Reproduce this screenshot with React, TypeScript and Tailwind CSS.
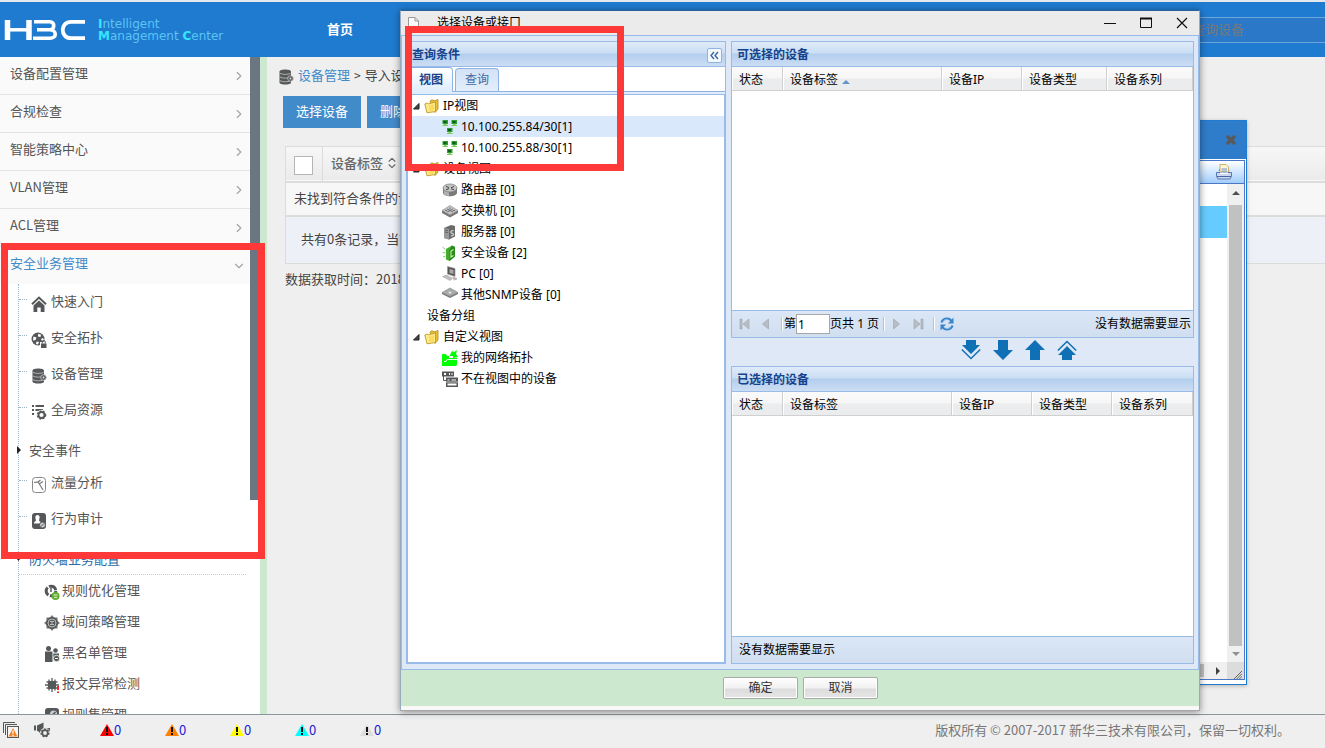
import React from "react";
import { ChevronDown, ChevronRight, ChevronsUpDown } from "lucide-react";

type IconProps = { children: React.ReactNode; className?: string; box?: string };

function Svg({ children, className = "size-4", box = "0 0 16 16" }: IconProps) {
  return (
    <svg viewBox={box} className={`shrink-0 ${className}`} aria-hidden="true">
      {children}
    </svg>
  );
}

const DARK = "#555859";

/* ---------- sidebar icons ---------- */

const HomeIcon = () => (
  <Svg>
    <path d="M1 8.200 8 1.600l7 6.600" fill="none" stroke={DARK} strokeWidth="2" />
    <path d="M2.500 9.600 8 4.600l5.500 5V16h-3.800v-4.500H6.300V16H2.500z" fill={DARK} />
  </Svg>
);

const GlobeLockIcon = () => (
  <Svg>
    <circle cx="7" cy="7" r="6.500" fill={DARK} />
    <path d="M2.500 4.500l3 1-1 2.500-2.500.500zM7 2l3 .500-.500 2.500-2.500-.500zM11 6l2 1-1 2-2-1zM5.500 9.500l2.500.500-1 2.500-2-.500z" fill="#fff" />
    <path d="M9 10h7v6H9z" fill="#fff" />
    <path d="M10 11.500h5.500V16H10z" fill={DARK} />
    <path d="M11.200 11.500V10a1.500 1.500 0 0 1 3 0v1.500" fill="none" stroke={DARK} />
  </Svg>
);

const DatabaseIcon = () => (
  <Svg>
    <path d="M1.500 2.500C1.500-.300 13-.300 13 2.500v11c0 2.800-11.500 2.800-11.500 0z" fill={DARK} />
    <path d="M2 4.300c2 1.500 8.500 1.500 10.500 0M2 8c2 1.500 8.500 1.500 10.500 0M2 11.700c2 1.500 8.500 1.500 10.500 0" fill="none" stroke="#c4c4c4" strokeWidth=".8" />
    <circle cx="12.500" cy="9.500" r="2.800" fill={DARK} stroke="#ccc" strokeWidth=".8" />
    <circle cx="12.500" cy="9.500" r="1" fill="#ddd" />
  </Svg>
);

const Gear = ({ x, y, r, bg = "#fff" }: { x: number; y: number; r: number; bg?: string }) => (
  <>
    <circle cx={x} cy={y} r={r + 1.8} fill={bg} />
    <circle cx={x} cy={y} r={r + 0.6} fill="none" stroke={DARK} strokeWidth="1.600" strokeDasharray="1.700 1.600" />
    <circle cx={x} cy={y} r={r - 0.4} fill={bg} stroke={DARK} strokeWidth="1.800" />
  </>
);

const ResourceIcon = () => (
  <Svg>
    <path d="M1 2h2M4.500 2H13M1 6h2M4.500 6H12M1 10h2" stroke={DARK} strokeWidth="2" />
    <Gear x={10.5} y={11} r={3.4} />
  </Svg>
);

const FlowIcon = () => (
  <Svg>
    <rect x="1.500" y=".5" width="13" height="15" rx="3" fill="#fff" stroke="#888" />
    <path d="M3 5.500l4-.500 2 3 3 5M7 5l2.500-2M8 7l4-2.500" fill="none" stroke="#777" strokeWidth="1.200" />
  </Svg>
);

const AuditIcon = () => (
  <Svg>
    <rect x="1" y="0" width="14" height="16" rx="3" fill={DARK} />
    <path d="M6.500 2c2.500 0 2.500 3 1.500 5 0 2 2 1 2.500 3.500H3C3 8 5 9 5 7 4 5 4 2 6.500 2z" fill="#fff" />
    <circle cx="11.500" cy="12" r="3" fill="#ccc" stroke={DARK} />
    <path d="M10 13.500l3-3" stroke={DARK} />
  </Svg>
);

const OptimizeIcon = () => (
  <Svg>
    <circle cx="7" cy="7" r="4.800" fill="#fff" stroke={DARK} strokeWidth="3" strokeDasharray="8.500 1.500" />
    <path d="M7 4v4" fill="none" stroke={DARK} strokeWidth="1.500" />
    <circle cx="11.500" cy="12" r="4" fill="#62ad2e" />
    <path d="M9.500 11h4M10 13.300h3.200" stroke="#e5f5d8" />
  </Svg>
);

const TargetIcon = () => (
  <Svg>
    <path d="M8 0l2 2.500h3.500V6L16 8l-2.500 2v3.500H10L8 16l-2-2.500H2.500V10L0 8l2.500-2V2.500H6z" fill="#777" />
    <circle cx="8" cy="8" r="6" fill={DARK} />
    <circle cx="8" cy="8" r="4" fill="none" stroke="#bbb" />
    <path d="M6 6.500h4M6 9.500h4M8 6v4" stroke="#bbb" />
  </Svg>
);

const BlacklistIcon = () => (
  <Svg>
    <circle cx="4.500" cy="2.500" r="2.500" fill={DARK} />
    <path d="M1 5.500h7.500V16H1z" fill={DARK} />
    <circle cx="11.500" cy="4.500" r="2.300" fill={DARK} />
    <path d="M9.300 7.500H15v6H9.300z" fill={DARK} />
    <circle cx="12.500" cy="12.500" r="3.200" fill={DARK} stroke="#fff" strokeWidth=".8" />
    <path d="M11 12.500h3" stroke="#fff" />
  </Svg>
);

const PacketIcon = () => (
  <Svg>
    <path d="M8 1v14M1 8h14M5 2.500v11M11 2.500v11M2.500 5h11M2.500 11h11" stroke={DARK} strokeWidth="1.300" />
    <rect x="4" y="4" width="8" height="8" rx="2" fill={DARK} />
    <path d="M14 9v4M14 14.500V16" stroke="#f22" strokeWidth="2" />
  </Svg>
);

const RuleSetIcon = () => (
  <Svg>
    <rect x="1" y="0" width="14" height="15" rx="3" fill={DARK} />
    <circle cx="9.500" cy="6" r="3.500" fill="#ccc" />
    <path d="M7.500 8l4-4" stroke={DARK} strokeWidth="1.500" />
  </Svg>
);

/* ---------- device tree icons ---------- */

const FolderIcon = () => (
  <Svg>
    <path d="M6 3.500 7 2h2l1 1 4-1.500v9.500L11 14.500z" fill="#eebf35" stroke="#b48a17" strokeWidth=".8" />
    <path d="M.8 6 3 5l1.500.800L11.500 4v9.500L3 14.800z" fill="#fbe98b" stroke="#c29a22" strokeWidth=".9" />
    <path d="M5 7.500l5-1.300v6l-5 .900z" fill="#f9db5e" />
  </Svg>
);

const HostGlyph = ({ x, y }: { x: number; y: number }) => (
  <g transform={`translate(${x} ${y})`}>
    <rect x=".5" y="0" width="5.500" height="4" fill="#2f9e2f" />
    <rect x="1.500" y="1" width="3" height="2" fill="#0a5c1a" />
    <path d="M2 4h2.500v1H6v1H.5V5H2z" fill="#7ccc5e" />
  </g>
);

const SubnetIcon = () => (
  <Svg>
    <HostGlyph x={0} y={1} />
    <HostGlyph x={9} y={1} />
    <HostGlyph x={4.5} y={9} />
  </Svg>
);

const RouterIcon = () => (
  <Svg>
    <path d="M1 6v4.500c0 5 14 5 14 0V6z" fill="#7a7a7a" />
    <path d="M2 8v4c1.500 1.500 4 2 5 2V9z" fill="#b0b0b0" />
    <ellipse cx="8" cy="6" rx="7" ry="4" fill="#c4c4c4" stroke="#777" strokeWidth=".7" />
    <path d="M4 4.500l3 1M12 4.500 9 5.700M4 7.700l3-1M12 7.700 9 6.700" stroke="#444" />
  </Svg>
);

const SwitchIcon = () => (
  <Svg>
    <path d="M0 7.500v2.500l8 4.500 8-4.500V7.500z" fill="#777" />
    <path d="M0 7.500 8 2.500l8 5L8 12z" fill="#c4c4c4" stroke="#888" strokeWidth=".6" />
    <path d="M5 6l6 3M11 6 5 9M8 4.500V6M3 7.500h2M11 7.500h2" stroke="#666" strokeWidth=".9" />
  </Svg>
);

const ServerIcon = () => (
  <Svg>
    <path d="M2 4 9 1 13 2v10.500L7 15.500 2 14z" fill="#6a6a6a" />
    <path d="M2 4l5 1v10.500L2 14z" fill="#999" />
    <path d="M3 6l3 .700M3 8l3 .700" stroke="#555" strokeWidth=".8" />
    <path d="M11.500 6.500 9 7v2.200l2.300.300v2L8.800 12" fill="none" stroke="#ddd" />
  </Svg>
);

const SecurityIcon = () => (
  <Svg>
    <path d="M4 4 10 .5l3 1.500v9.500L7.500 16 4 14.500z" fill="#43ad2b" />
    <path d="M10 .5 13 2v9.500L7.500 16V5z" fill="#2a8a1d" />
    <path d="M.5 2l3 2.500M.5 7.500l3 .500M1 12l2.500-1" stroke="#7bd46a" />
    <path d="M11.500 4.500 9 6v6l2.500-1.500" fill="none" stroke="#c5f3a8" strokeWidth="1.100" />
  </Svg>
);

const PcIcon = () => (
  <Svg>
    <path d="M5.500.5l7.500 2v8L5.500 8z" fill="#555" stroke="#999" strokeWidth=".7" />
    <path d="M7.500 3l4 1v4l-4-1z" fill="#aaa" />
    <path d="M.5 10.500l4-1.500 6 3.500-2.500 2z" fill="#c0c0c0" stroke="#999" strokeWidth=".5" />
    <path d="M10 10.500l5 1.500v1.500l-3 1z" fill="#b5b5b5" />
  </Svg>
);

const SnmpIcon = () => (
  <Svg>
    <path d="M0 5.500V7l8 4 8-4V5.500z" fill="#777" />
    <path d="M0 5.500 8 1l8 4.500-8 4z" fill="#a9a9a9" stroke="#888" strokeWidth=".6" />
    <path d="M6 4.500l4 .500-2 2z" fill="#e8e8e8" />
  </Svg>
);

const TopologyIcon = () => (
  <Svg>
    <path d="M0 4h4l1 2h2v2h8v6.500l-1 1.500H0z" fill="#0f0" />
    <path d="M2 11.500h2l1-2h11" fill="none" stroke="#fff" strokeWidth=".9" />
    <path d="M15 0l-3 2-2-1-2.500 5H11V8l5-1-2-3z" fill="#0f0" />
  </Svg>
);

const UnmappedIcon = () => (
  <Svg>
    <path d="M0 .5h12v5H0z" fill="#555" />
    <path d="M2 2h2v2H2zM7 2h1v2H7zM9.500 2h1v2h-1z" fill="#fff" />
    <path d="M1.500 5v4.500H4" fill="none" stroke="#555" />
    <path d="M4 6.500h12V16H4z" fill="#555" />
    <path d="M5.500 8.500h2v1h-2zM9.500 8.500H14v1H9.500zM5.500 12.500h9v2h-9z" fill="#fff" />
    <path d="M4 11h12" stroke="#ddd" strokeWidth=".8" />
  </Svg>
);

/* ---------- header ---------- */

function Header() {
  return (
    <header className="flex h-[57px] shrink-0 items-center border-t-2 border-[#e3e8ec] bg-[#1f7bd0]">
      <a href="#" aria-label="H3C" className="ml-1">
        <Svg className="h-[22px] w-[82px]" box="0 0 82 22">
          <g fill="none" stroke="#fff" strokeWidth="4.500">
            <path d="M3.500 1v20M25 1v20" strokeWidth="5.500" />
            <path d="M4 10.800h21" strokeWidth="3.500" />
            <path d="M30 2.800h16c5 0 5 7.600 0 7.900H33h13c7 .500 7 8.500 0 8.500H29" strokeWidth="3.600" />
            <path d="M81 2.800H67c-11 0-11 16.400 0 16.400h14" strokeWidth="3.800" />
          </g>
        </Svg>
      </a>
      <div className="ml-3 w-[229px] font-['DejaVu_Sans',sans-serif] text-[12px] leading-3 text-[#5cc4f4]">
        <div>
          <b className="text-[#35e6ff]">I</b>ntelligent
        </div>
        <div>
          <b className="text-[#35e6ff]">M</b>anagement <b className="text-[#35e6ff]">C</b>enter
        </div>
      </div>
      <a href="#" className="pb-[2px] text-[13px] font-bold text-white">
        首页
      </a>
      <input
        type="text"
        aria-label="查询设备"
        placeholder="查询设备"
        className="ml-auto h-[26px] w-[145px] border-y border-[#6aa5dc] bg-[#2a78c7] pb-[3px] pl-3 text-[13px] placeholder:text-[#76797c]"
      />
    </header>
  );
}

/* ---------- sidebar ---------- */

const sections = ["设备配置管理", "合规检查", "智能策略中心", "VLAN管理", "ACL管理"];

function Leaf({ icon, label }: { icon: React.ReactNode; label: string }) {
  return (
    <li className="flex h-9 items-center">
      <span className="mb-[5px] w-2 border-t border-dotted border-[#9db7ca]" />
      <a href="#" className="ml-1 flex items-center gap-1 pb-[2px]">
        <span className="mt-[6px]">{icon}</span>
        {label}
      </a>
    </li>
  );
}

function SubLeaf({ icon, label }: { icon: React.ReactNode; label: string }) {
  return (
    <li className="flex h-[31px] items-center pl-[25px]">
      <a href="#" className="flex items-center gap-[2px] pb-[2px]">
        <span className="mt-1">{icon}</span>
        {label}
      </a>
    </li>
  );
}

function Branch({ open, label }: { open?: boolean; label: string }) {
  return (
    <div className="flex h-[37px] items-center pt-[6px]">
      <Svg className="-ml-1 h-2 w-2" box="0 0 8 8">
        {open ? <path d="M0 1.500h7L3.500 6z" fill="#222" /> : <path d="M2 0v8l4-4z" fill="#222" />}
      </Svg>
      <a href="#" className={open ? "ml-[6px] text-[#2b6ca8]" : "ml-[6px]"}>
        {label}
      </a>
    </div>
  );
}

function Sidebar() {
  return (
    <aside className="flex w-[267px] shrink-0 overflow-hidden border-r-[7px] border-[#cce8cf] bg-white text-[13px] text-[#555]">
      <nav className="min-w-0 flex-1">
        <ul className="bg-[#fafafa]">
          {sections.map((s) => (
            <li key={s} className="border-b border-[#e4e4e4]">
              <a href="#" className="flex h-[37px] items-center justify-between pr-1 pl-[10px]">
                <span className="pb-[6px]">{s}</span>
                <ChevronRight className="size-[14px] text-[#a5a5a5]" />
              </a>
            </li>
          ))}
          <li>
            <a href="#" className="flex h-[37px] items-center justify-between pr-1 pl-[10px] text-[#428bca]">
              <span className="pb-[6px]">安全业务管理</span>
              <ChevronDown className="size-[14px] text-[#a5a5a5]" />
            </a>
          </li>
        </ul>
        <ul className="ml-[18px] border-l border-dotted border-[#9db7ca]">
          <Leaf icon={<HomeIcon />} label="快速入门" />
          <Leaf icon={<GlobeLockIcon />} label="安全拓扑" />
          <Leaf icon={<DatabaseIcon />} label="设备管理" />
          <Leaf icon={<ResourceIcon />} label="全局资源" />
          <li>
            <Branch label="安全事件" />
            <ul>
              <Leaf icon={<FlowIcon />} label="流量分析" />
              <Leaf icon={<AuditIcon />} label="行为审计" />
            </ul>
          </li>
          <li>
            <div className="mr-1 border-b border-dotted border-[#ccc]">
              <Branch open label="防火墙业务配置" />
            </div>
            <ul>
              <SubLeaf icon={<OptimizeIcon />} label="规则优化管理" />
              <SubLeaf icon={<TargetIcon />} label="域间策略管理" />
              <SubLeaf icon={<BlacklistIcon />} label="黑名单管理" />
              <SubLeaf icon={<PacketIcon />} label="报文异常检测" />
              <SubLeaf icon={<RuleSetIcon />} label="规则集管理" />
            </ul>
          </li>
        </ul>
      </nav>
      <div className="h-[443px] w-[10px] bg-[#6a7782]" />
    </aside>
  );
}

/* ---------- main page ---------- */

function MainPage() {
  return (
    <main className="min-w-0 flex-1 overflow-hidden text-[13px] text-[#444]">
      <div className="flex h-9 items-center pl-[11px]">
        <span className="mt-1 mr-1">
          <DatabaseIcon />
        </span>
        <a href="#" className="text-[#428bca]">
          设备管理
        </a>
        <span className="mx-1 text-[12px]">&gt;</span>
        <span>导入设备</span>
      </div>
      <div className="mt-[3px] flex gap-[6px] pl-4 text-white">
        <button className="h-8 bg-[#428bca] px-[13px] pb-[2px] text-[13px]">选择设备</button>
        <button className="h-8 bg-[#428bca] px-[13px] pb-[2px] text-[13px]">删除</button>
      </div>
      <table className="mt-[18px] ml-[18px] w-full table-fixed border-collapse border border-[#dcdcdc] text-left">
        <thead>
          <tr className="h-[35px] border-b-2 border-[#dcdcdc] bg-linear-to-b from-[#f7f7f7] to-[#ebebeb]">
            <th className="w-[37px] border-r border-[#dcdcdc] pt-1 pl-2">
              <input
                type="checkbox"
                aria-label="全选"
                className="block size-[19px] appearance-none border border-[#b5b5b5] bg-white"
              />
            </th>
            <th className="pb-px pl-2 font-medium text-[#666]">
              <span className="flex items-center gap-[2px]">
                设备标签
                <ChevronsUpDown className="size-[14px]" />
              </span>
            </th>
          </tr>
        </thead>
        <tbody>
          <tr className="h-[34px] border-b-2 border-[#dcdcdc] bg-[#f7f7f7]">
            <td colSpan={2} className="pb-[2px] pl-2">
              未找到符合条件的设备
            </td>
          </tr>
          <tr className="h-[48px] bg-[#edf0f6]">
            <td colSpan={2} className="pb-[2px] pl-[15px]">
              共有0条记录，当前第1页
            </td>
          </tr>
        </tbody>
      </table>
      <p className="mt-[5px] pl-[18px]">数据获取时间：2018</p>
    </main>
  );
}

/* ---------- footer ---------- */

const alarms = [
  { name: "紧急", fill: "#ff0000" },
  { name: "重要", fill: "#ff8000" },
  { name: "次要", fill: "#ffff00" },
  { name: "警告", fill: "#00ffff" },
  { name: "通知", fill: "#dddddd" },
];

function Footer() {
  return (
    <footer className="flex h-[34px] shrink-0 items-center border-t border-[#8b959c] bg-[#efefef] pb-[3px] text-[13px]">
      <button aria-label="告警列表" className="ml-[3px]">
        <Svg>
          <path d="M.5 11V.5H12M2.500 13V2.500H14" fill="none" stroke={DARK} />
          <rect x="4.500" y="4.500" width="11" height="11" fill="#f5f5f5" stroke={DARK} />
          <path d="M10 6l4.500 8.500h-9z" fill="#f58220" />
          <path d="M10 8.500v3.300M10 12.700v1.200" stroke="#fff" strokeWidth="1.300" />
        </Svg>
      </button>
      <button aria-label="告警设置" className="mr-[50px] ml-[15px]">
        <Svg>
          <path d="M0 3.500h2v5H0zM3 3.500 9.500.500v6L16 6v4L3 9z" fill={DARK} />
          <path d="M4 9h4v4z" fill={DARK} />
          <Gear x={11} y={11} r={3.2} bg="#efefef" />
        </Svg>
      </button>
      <ul className="flex">
        {alarms.map((a) => (
          <li key={a.name} className="flex w-[65px] items-center">
            <Svg className="h-3 w-[14px]" box="0 0 14 12">
              <path d="M7 0l7 12H0z" fill={a.fill} />
              <path d="M7 3v5M7 9v2" stroke="#111" strokeWidth="2" />
            </Svg>
            <a href="#" aria-label={a.name} className="text-[#1a1ad8]">
              0
            </a>
          </li>
        ))}
      </ul>
      <p className="mr-[35px] ml-auto text-[#777]">版权所有 © 2007-2017 新华三技术有限公司，保留一切权利。</p>
    </footer>
  );
}

/* ---------- window behind the dialog ---------- */

function BackWindow() {
  return (
    <section className="absolute top-[120px] left-[1047px] flex h-[565px] w-[200px] flex-col border border-[#1f7bd0] bg-white shadow-[0_1px_4px_rgba(0,0,0,0.25)]">
      <div className="flex h-[38px] items-center justify-end bg-[#2f7cca] pr-[9px]">
        <button aria-label="关闭窗口">
          <Svg className="size-3" box="0 0 12 12">
            <path d="M2 2l8 8M10 2l-8 8" stroke="#595959" strokeWidth="3.400" />
          </Svg>
        </button>
      </div>
      <div className="mt-px mr-px mb-1 flex flex-1 flex-col border border-[#4a77c8]">
        <div className="flex h-[23px] items-center justify-end border-b border-[#4a77c8] bg-linear-to-b from-white to-[#a3cdfb] pr-3">
          <button aria-label="打印">
            <Svg>
              <path d="M3 7 4 5h8l1 2" fill="#dce6f5" stroke="#5c76ab" />
              <path d="M4 .5h6l2.500 2.500v5H4z" fill="#fff6d8" stroke="#c8a24a" strokeWidth=".8" />
              <path d="M5.500 5h5.500M5.500 7h5.500" stroke="#6d8fcf" />
              <path d="M.5 8.500h15v4l-1.500 2.500h-12L.5 12.500z" fill="#c9d7ef" stroke="#5c76ab" />
              <path d="M4 8.500h8v1.500H4z" fill="#fff" />
              <path d="M1 12.500h14" stroke="#4866a3" />
            </Svg>
          </button>
        </div>
        <div className="flex flex-1">
          <div className="flex-1 pt-[22px]">
            <div className="h-8 bg-[#66ccff]" />
          </div>
          <div className="flex w-[17px] flex-col items-center bg-[#f0f0f0]">
            <Svg className="mt-[7px] h-1 w-2" box="0 0 8 4">
              <path d="M4 0l4 4H0z" fill="#505050" />
            </Svg>
            <div className="mt-[10px] w-[13px] flex-1 bg-[#c1c1c1]" />
            <Svg className="my-[6px] h-1 w-2" box="0 0 8 4">
              <path d="M4 4l4-4H0z" fill="#909090" />
            </Svg>
          </div>
        </div>
        <div className="flex h-[17px] items-center bg-[#f0f0f0]">
          <div className="ml-10 h-[13px] w-[115px] bg-[#c1c1c1]" />
          <Svg className="ml-auto h-2 w-1" box="0 0 4 8">
            <path d="M0 0l4 4-4 4z" fill="#404040" />
          </Svg>
          <div className="ml-[7px] flex h-full w-[17px] items-end justify-end bg-[#dcdcdc] pr-[2px]">
            <Svg className="size-2" box="0 0 9 9">
              <path d="M0 9l9-9M3 9l6-6M6 9l3-3" stroke="#555" />
            </Svg>
          </div>
        </div>
      </div>
    </section>
  );
}

/* ---------- dialog ---------- */

const panelHead =
  "flex h-[25px] shrink-0 items-center justify-between border-b border-[#99bbe8] bg-[linear-gradient(#dfebf9_0%,#cbdef4_46%,#b3ceee_50%,#ccddf4_100%)] px-[5px] pt-[2px] font-bold text-[#15428b]";

type Node = { icon?: React.ReactNode; label: string; root?: boolean; bare?: boolean; active?: boolean };

const nodes: Node[] = [
  { root: true, label: "IP视图" },
  { icon: <SubnetIcon />, label: "10.100.255.84/30[1]", active: true },
  { icon: <SubnetIcon />, label: "10.100.255.88/30[1]" },
  { root: true, label: "设备视图" },
  { icon: <RouterIcon />, label: "路由器 [0]" },
  { icon: <SwitchIcon />, label: "交换机 [0]" },
  { icon: <ServerIcon />, label: "服务器 [0]" },
  { icon: <SecurityIcon />, label: "安全设备 [2]" },
  { icon: <PcIcon />, label: "PC [0]" },
  { icon: <SnmpIcon />, label: "其他SNMP设备 [0]" },
  { bare: true, label: "设备分组" },
  { root: true, label: "自定义视图" },
  { icon: <TopologyIcon />, label: "我的网络拓扑" },
  { icon: <UnmappedIcon />, label: "不在视图中的设备" },
];

function TreeRow({ node }: { node: Node }) {
  if (node.root) {
    return (
      <li className="flex h-[21px] items-center pl-1">
        <Svg className="mr-1 size-2" box="0 0 8 8">
          <path d="M7 1.500V7H1.500z" fill="#444" stroke="#222" />
        </Svg>
        <FolderIcon />
        <span className="ml-[3px]">{node.label}</span>
      </li>
    );
  }
  if (node.bare) {
    return <li className="flex h-[21px] items-center pl-[19px]">{node.label}</li>;
  }
  return (
    <li className={`flex h-[21px] items-center gap-[3px] pl-[34px] ${node.active ? "bg-[#d9e8fb]" : ""}`}>
      {node.icon}
      {node.label}
    </li>
  );
}

function QueryPanel() {
  return (
    <section className="flex w-[320px] shrink-0 flex-col border border-[#99bbe8] bg-white">
      <h2 className={panelHead}>
        查询条件
        <button
          aria-label="折叠"
          className="-mr-[2px] flex size-[15px] items-center justify-center rounded-xs border border-[#8fb3e2] bg-[#f3f8fe]"
        >
          <Svg className="size-[9px]" box="0 0 9 9">
            <path d="M4 1 1 4.500 4 8M8 1 5 4.500 8 8" fill="none" stroke="#34619c" strokeWidth="1.300" />
          </Svg>
        </button>
      </h2>
      <div role="tablist" className="flex h-[25px] shrink-0 items-end gap-[2px] border-b border-[#8db2e3] pl-[2px]">
        <button
          role="tab"
          aria-selected="true"
          className="-mb-px h-[25px] rounded-t-sm border border-b-0 border-[#8db2e3] bg-linear-to-b from-white to-[#deecfd] px-[9px] font-bold text-[#15428b]"
        >
          视图
        </button>
        <button
          role="tab"
          aria-selected="false"
          className="h-[23px] rounded-t-sm border border-b-0 border-[#8db2e3] bg-linear-to-b from-[#d3e2f6] to-[#e4eefb] px-[9px] text-[#416aa3]"
        >
          查询
        </button>
      </div>
      <div className="h-[3px] shrink-0 border-b border-[#99bbe8] bg-[#deecfd]" />
      <ul className="flex-1 border-x border-b border-[#99bbe8]">
        {nodes.map((n) => (
          <TreeRow key={n.label} node={n} />
        ))}
      </ul>
    </section>
  );
}

const th =
  "h-6 border-r border-b border-[#d0d0d0] bg-[linear-gradient(#fafafa_0%,#f6f6f6_48%,#ebecee_52%,#ebecee_100%)] pt-[2px] pl-[7px] font-normal shadow-[inset_1px_0_#fff]";

function DeviceTable({ wide }: { wide?: boolean }) {
  return (
    <table className="w-full table-fixed border-separate border-spacing-0 text-left">
      <thead>
        <tr>
          <th className={`w-[51px] ${th}`}>状态</th>
          <th className={th}>
            <span className="flex items-center gap-1">
              设备标签
              {!wide && (
                <Svg className="mt-1 h-1 w-2" box="0 0 8 4">
                  <path d="M4 0l4 4H0z" fill="#6593cf" />
                </Svg>
              )}
            </span>
          </th>
          <th className={`w-[80px] ${th}`}>设备IP</th>
          <th className={wide ? `w-[80px] ${th}` : `w-[85px] ${th}`}>设备类型</th>
          <th className={wide ? `w-[81px] ${th}` : `w-[86px] ${th}`}>设备系列</th>
        </tr>
      </thead>
    </table>
  );
}

const bar = "flex h-[27px] shrink-0 items-center border-t border-[#99bbe8] bg-linear-to-b from-[#dbe7f6] to-[#d0def0]";

function Separator() {
  return <span className="h-[14px] w-[2px] border-r border-l border-r-white border-l-[#98c8ff]" />;
}

function Pager() {
  return (
    <div className={bar}>
      <button aria-label="第一页" className="ml-[7px]">
        <Svg className="h-3 w-[11px]" box="0 0 11 12">
          <path d="M1 1h2v10H1zM10 1v10L4 6z" fill="#b9bdc4" stroke="#9ba1aa" strokeWidth=".6" />
        </Svg>
      </button>
      <button aria-label="上一页" className="ml-3">
        <Svg className="h-3 w-[7px]" box="0 0 7 12">
          <path d="M6.500 1v10L.5 6z" fill="#b9bdc4" stroke="#9ba1aa" strokeWidth=".6" />
        </Svg>
      </button>
      <span className="ml-3 flex">
        <Separator />
      </span>
      <label htmlFor="page" className="ml-px">
        第
      </label>
      <input
        id="page"
        defaultValue="1"
        className="h-5 w-[34px] border border-[#a8a8a8] bg-white pl-px text-[12px] outline-none"
      />
      <span className="mr-1">页共 1 页</span>
      <Separator />
      <button aria-label="下一页" className="ml-2">
        <Svg className="h-3 w-[7px]" box="0 0 7 12">
          <path d="M.5 1v10l6-5z" fill="#b9bdc4" stroke="#9ba1aa" strokeWidth=".6" />
        </Svg>
      </button>
      <button aria-label="最后一页" className="ml-[13px]">
        <Svg className="h-3 w-[11px]" box="0 0 11 12">
          <path d="M8 1h2v10H8zM1 1v10l6-5z" fill="#b9bdc4" stroke="#9ba1aa" strokeWidth=".6" />
        </Svg>
      </button>
      <span className="ml-[9px] flex">
        <Separator />
      </span>
      <button aria-label="刷新" className="ml-1">
        <Svg>
          <g fill="none" stroke="#3a84cc" strokeWidth="2.200">
            <path d="M2.500 6.500C4 1.500 10.500 1.500 12.500 5" />
            <path d="M13.500 9.500C12 14.500 5.500 14.500 3.500 11" />
          </g>
          <path d="M14.500 1.500v6H9zM1.500 14.500v-6H7z" fill="#3a84cc" />
          <path d="M4 5.500c2-3 5.500-2.500 7 0M12 10.500c-2 3-5.500 2.500-7 0" fill="none" stroke="#9fd0f5" strokeWidth=".8" />
        </Svg>
      </button>
      <span className="mr-[2px] ml-auto">没有数据需要显示</span>
    </div>
  );
}

const BLUE = "#1070b6";

function MoveButtons() {
  return (
    <div className="flex h-7 shrink-0 items-center gap-3 pb-1 pl-[calc(50%-2px)]">
      <button aria-label="全部添加">
        <Svg className="size-5" box="0 0 20 20">
          <path d="M5 0h10v5h4L10 14 1 5h4z" fill={BLUE} />
          <path d="M.8 9.500 10 18.500l9.200-9" fill="none" stroke={BLUE} strokeWidth="1.500" />
        </Svg>
      </button>
      <button aria-label="添加">
        <Svg className="size-5" box="0 0 20 20">
          <path d="M5 0h10v10h5L10 20 0 10h5z" fill={BLUE} />
        </Svg>
      </button>
      <button aria-label="移除">
        <Svg className="size-5" box="0 0 20 20">
          <path d="M5 20h10V10h5L10 0 0 10h5z" fill={BLUE} />
        </Svg>
      </button>
      <button aria-label="全部移除">
        <Svg className="size-5" box="0 0 20 20">
          <path d="M5 20h10v-5h4L10 6 1 15h4z" fill={BLUE} />
          <path d="M.8 10.500 10 1.500l9.200 9" fill="none" stroke={BLUE} strokeWidth="1.500" />
        </Svg>
      </button>
    </div>
  );
}

const dialogButton =
  "h-[22px] w-[75px] rounded-xs border border-[#aaa] bg-[linear-gradient(#fff_0%,#f1f1f1_50%,#dcdcdc_55%,#e6e6e6_100%)] text-[12px] text-[#333] shadow-[inset_0_0_0_1px_#fff]";

function DeviceDialog() {
  return (
    <section
      role="dialog"
      aria-labelledby="dialog-title"
      className="absolute top-[10px] left-[400px] flex h-[701px] w-[800px] flex-col border border-x-[#9aaabd] border-t-[#25609b] border-b-[#a5a5a5] bg-[#f8f8f8] font-['Noto_Sans','Noto_Sans_CJK_SC',sans-serif] text-[12px] leading-4 text-black shadow-[0_1px_7px_rgba(0,0,0,0.45)]"
    >
      <div className="flex h-6 shrink-0 items-center bg-[#ebebeb] pr-[11px] pl-[7px]">
        <Svg className="h-3 w-[11px]" box="0 0 11 12">
          <path d="M.5.500h6.500l3.500 3.500v7.500H.5z" fill="#fafafa" stroke="#999" />
          <path d="M7 .5v3.500h3.500" fill="none" stroke="#999" />
        </Svg>
        <h1 id="dialog-title" className="ml-[18px]">
          选择设备或接口
        </h1>
        <div className="ml-auto flex gap-6">
          <button aria-label="最小化">
            <Svg className="size-3" box="0 0 12 12">
              <path d="M0 6.500h12" stroke="#111" />
            </Svg>
          </button>
          <button aria-label="最大化">
            <Svg className="size-3" box="0 0 12 12">
              <path d="M.5 1.500h11v9H.5z" fill="none" stroke="#111" />
              <path d="M0 1.500h12" stroke="#111" strokeWidth="2" />
            </Svg>
          </button>
          <button aria-label="关闭">
            <Svg className="size-3" box="0 0 12 12">
              <path d="M1 1l10 10M11 1 1 11" stroke="#111" strokeWidth="1.200" />
            </Svg>
          </button>
        </div>
      </div>
      <div className="flex min-h-0 flex-1 gap-[5px] border border-[#99bbe8] bg-[#dfe8f6] px-1 py-[5px]">
        <QueryPanel />
        <div className="flex min-w-0 flex-1 flex-col">
          <section className="flex h-[297px] shrink-0 flex-col border border-[#99bbe8] bg-white">
            <h2 className={panelHead}>可选择的设备</h2>
            <div className="flex-1">
              <DeviceTable />
            </div>
            <Pager />
          </section>
          <MoveButtons />
          <section className="flex flex-1 flex-col border border-[#99bbe8] bg-white">
            <h2 className={panelHead}>已选择的设备</h2>
            <div className="flex-1">
              <DeviceTable wide />
            </div>
            <p className={`${bar} pl-[7px]`}>没有数据需要显示</p>
          </section>
        </div>
      </div>
      <div className="mb-1 flex h-9 shrink-0 items-center justify-center gap-[5px] bg-[#cce8cf] pl-px">
        <button className={dialogButton}>确定</button>
        <button className={dialogButton}>取消</button>
      </div>
    </section>
  );
}

export default function App() {
  return (
    <div className="relative flex h-screen flex-col overflow-hidden bg-[#efefef] font-['Noto_Sans_CJK_SC',sans-serif] leading-5">
      <Header />
      <div className="flex min-h-0 flex-1">
        <Sidebar />
        <MainPage />
      </div>
      <Footer />
      <BackWindow />
      <DeviceDialog />
      <div className="pointer-events-none absolute top-[243px] left-px h-[316px] w-[264px] border-[7px] border-[#ff3838]" />
      <div className="pointer-events-none absolute top-[26px] left-[405px] h-[145px] w-[219px] border-[7px] border-[#ff3838]" />
    </div>
  );
}
